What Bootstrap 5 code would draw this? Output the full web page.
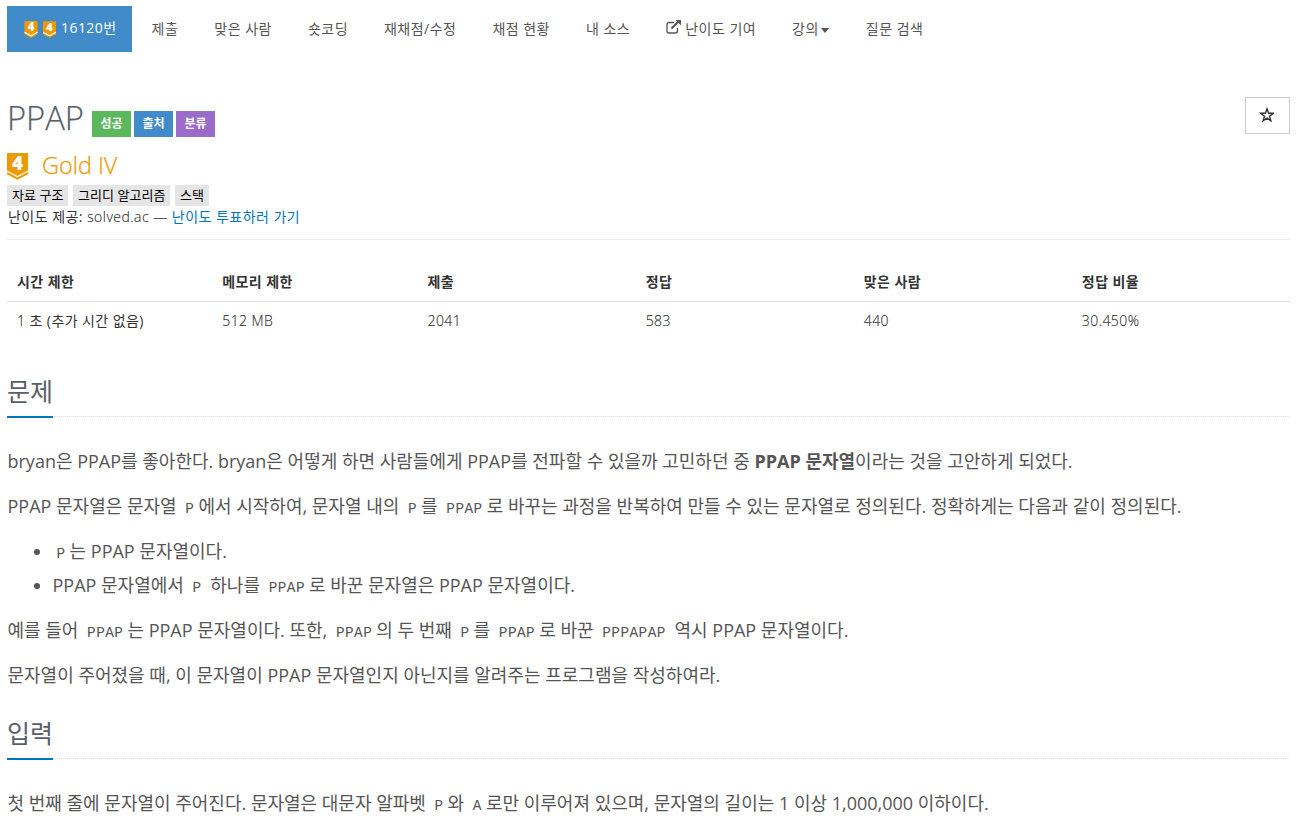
<!DOCTYPE html>
<html lang="ko">
  <head>
    <meta charset="UTF-8" />
    <title>16120번: PPAP</title>
    <meta name="viewport" content="width=device-width, initial-scale=1.0" />
    <link
      href="https://cdn.jsdelivr.net/npm/bootstrap@5.3.0/dist/css/bootstrap.min.css"
      rel="stylesheet"
    />
    <style>
      body {
        font-family: "Open Sans", "Noto Sans CJK KR", sans-serif;
        font-size: 14px;
        line-height: 20px;
        letter-spacing: 0.42px;
        color: #333;
        overflow: hidden;
      }
      .page-wrap {
        padding: 6px 18px 0 7px;
      }
      .problem-menu {
        --bs-nav-link-padding-x: 16px;
        --bs-nav-link-padding-y: 13px;
        --bs-nav-link-color: #555;
        --bs-nav-link-hover-color: #0076c0;
        --bs-nav-pills-border-radius: 0;
        --bs-nav-pills-link-active-bg: #428bca;
        gap: 4px;
      }
      .problem-menu .nav-link {
        font-size: 14px;
        letter-spacing: 0.48px;
        white-space: nowrap;
      }
      .problem-menu .nav-link.active {
        gap: 5px;
        padding: 12px 15px 14px 17px;
        letter-spacing: 0.45px;
      }
      .problem-menu .active svg { margin-top: 3px; }
      .caret {
        width: 0;
        border-top: 5px solid;
        border-left: 4.5px solid transparent;
        border-right: 4.5px solid transparent;
        margin: 2px 1px 0 2px;
      }
      .title-row { margin-top: 45px; }
      .title-main { padding-top: 3px; }
      .problem-title {
        font-size: 32.7px;
        font-weight: 300;
        line-height: 36px;
        letter-spacing: 0;
        color: #585f69;
        -webkit-text-stroke: 0.25px;
        margin-bottom: 1px;
      }
      .labels { gap: 3px; }
      .problem-label {
        font-size: 12px;
        font-weight: 600;
        line-height: 26px;
        letter-spacing: 0;
        width: 39px;
        text-align: center;
        color: #fff;
      }
      .bg-success-label { background: #5cb85c; }
      .bg-source-label { background: #428bca; }
      .bg-category-label { background: #9b6bcc; }
      .btn-star {
        width: 45px;
        height: 37px;
        border: 1px solid #ccc;
        border-radius: 0;
      }
      .tier-row {
        gap: 14px;
        margin-top: 16px;
      }
      .tier-name {
        font-size: 23.4px;
        font-weight: 300;
        line-height: 24px;
        letter-spacing: 0;
        color: #ec9a00;
        -webkit-text-stroke: 0.25px;
      }
      .tag-row {
        gap: 4.5px;
        margin-top: 5px;
      }
      .tag-item {
        font-size: 13px;
        line-height: 21px;
        letter-spacing: 0.05px;
        padding: 0 5px;
        background: #e5e5e5;
        color: #000;
      }
      .light-text {
        font-weight: 300;
        -webkit-text-stroke: 0.15px;
      }
      .provider {
        letter-spacing: 0.47px;
        margin-top: 1px;
        padding-left: 1px;
      }
      .provider a { color: #0076c0; }
      .title-rule {
        border-top: 1px solid #eee;
        opacity: 1;
        margin: 12px 0 24px;
      }
      .info-table {
        --bs-table-color: #333;
        table-layout: fixed;
        margin-bottom: 22px;
      }
      .info-table th,
      .info-table td {
        padding: 9px 8px 8px 10px;
        border: 0;
      }
      .info-table thead th {
        padding-top: 8px;
        padding-bottom: 9px;
        border-bottom: 1px solid #ddd;
      }
      .problem-section { padding-top: 14px; }
      .section-head { border-bottom: 1px dotted #e0e4ea; }
      .section-head h2 {
        font-size: 25px;
        font-weight: 400;
        line-height: 33px;
        letter-spacing: 0;
        color: #585f69;
        padding-bottom: 8px;
        margin: 0 0 -2px;
        border-bottom: 2px solid #0076c0;
      }
      .problem-text {
        font-size: 18px;
        line-height: 34px;
        letter-spacing: 0;
        color: #555;
        white-space: nowrap;
        padding: 27px 0 0 0.5px;
      }
      .problem-text p,
      .problem-text ul {
        margin-bottom: 11px;
      }
      .problem-text ul { padding-left: 45px; }
      .problem-text code {
        font-family: "Liberation Mono", monospace;
        font-size: 14.4px;
        line-height: 1;
        letter-spacing: 0.45px;
        color: #555;
        padding: 2px 4px;
      }
    </style>
  </head>
  <body>
    <svg class="d-none">
      <symbol id="tier" viewBox="0 0 21 27">
        <path fill="#ec9a00" d="M0 0h21v17.500l-10.500 5.500L0 17.500z" />
        <path fill="none" stroke="#ec9a00" stroke-width="2" d="M0 20l10.500 5.700L21 20" />
        <text x="10.500" y="17" text-anchor="middle" font-size="19" font-weight="800" letter-spacing="0" fill="#fff">4</text>
      </symbol>
      <symbol id="tier-small" viewBox="0 0 21 27">
        <path fill="#ec9a00" d="M0 0h21v21l-10.500 6L0 21z" />
        <path fill="none" stroke="#fff" stroke-width="1.800" d="M0 18l10.500 5.500L21 18" />
        <text x="10.500" y="16.500" text-anchor="middle" font-size="18" font-weight="800" letter-spacing="0" fill="#fff">4</text>
      </symbol>
    </svg>

    <div class="page-wrap">
      <ul class="nav nav-pills flex-nowrap problem-menu">
        <li class="nav-item">
          <a class="nav-link active d-flex align-items-center" href="#">
            <svg width="14" height="17"><use href="#tier-small" /></svg>
            <svg width="13" height="17"><use href="#tier-small" /></svg>
            <span>16120번</span>
          </a>
        </li>
        <li class="nav-item"><a class="nav-link" href="#">제출</a></li>
        <li class="nav-item"><a class="nav-link" href="#">맞은 사람</a></li>
        <li class="nav-item"><a class="nav-link" href="#">숏코딩</a></li>
        <li class="nav-item"><a class="nav-link" href="#">재채점/수정</a></li>
        <li class="nav-item"><a class="nav-link" href="#">채점 현황</a></li>
        <li class="nav-item"><a class="nav-link" href="#">내 소스</a></li>
        <li class="nav-item">
          <a class="nav-link d-flex align-items-center" href="#">
            <svg class="me-1 mb-1" width="15" height="14" viewBox="0 0 15 14" fill="none" stroke="currentColor">
              <path stroke-width="1.300" d="M8 2.500H3A2 2 0 0 0 1 4.500v6.500a2 2 0 0 0 2 2h6.500a2 2 0 0 0 2-2V8" />
              <path stroke-width="2" d="M5.500 8.500l6.500-6.500" />
              <path fill="currentColor" stroke="none" d="M9.500 0H15v5.500z" />
            </svg>
            난이도 기여
          </a>
        </li>
        <li class="nav-item">
          <a class="nav-link d-flex align-items-center" href="#">강의<span class="caret"></span></a>
        </li>
        <li class="nav-item"><a class="nav-link" href="#">질문 검색</a></li>
      </ul>

      <div class="d-flex justify-content-between align-items-start title-row">
        <div class="d-flex align-items-end title-main">
          <h1 class="problem-title me-2">PPAP</h1>
          <div class="d-flex labels">
            <span class="problem-label bg-success-label">성공</span>
            <span class="problem-label bg-source-label">출처</span>
            <span class="problem-label bg-category-label">분류</span>
          </div>
        </div>
        <button class="btn btn-star d-flex align-items-center justify-content-center p-0" type="button" aria-label="즐겨찾기">
          <svg class="me-1 mb-1" width="16" height="16" viewBox="0 0 16 16" fill="none" stroke="#333" stroke-width="1.400">
            <path d="M9 2.800l1.600 4.500h4.700l-3.800 2.900 1.400 4.600L9 12.100l-3.900 2.700 1.400-4.600-3.800-2.900h4.700z" />
          </svg>
        </button>
      </div>

      <div class="d-flex align-items-start tier-row">
        <svg width="21" height="27"><use href="#tier" /></svg>
        <span class="tier-name">Gold IV</span>
      </div>
      <div class="d-flex tag-row">
        <span class="tag-item">자료 구조</span>
        <span class="tag-item">그리디 알고리즘</span>
        <span class="tag-item">스택</span>
      </div>
      <div class="provider">
        난이도 제공: <span class="light-text">solved.ac —</span>
        <a class="text-decoration-none" href="#">난이도 투표하러 가기</a>
      </div>
      <hr class="title-rule" />

      <table class="table info-table">
        <colgroup>
          <col width="16%" /><col width="16%" /><col width="17%" />
          <col width="17%" /><col width="17%" /><col width="17%" />
        </colgroup>
        <thead>
          <tr>
            <th>시간 제한</th>
            <th>메모리 제한</th>
            <th>제출</th>
            <th>정답</th>
            <th>맞은 사람</th>
            <th>정답 비율</th>
          </tr>
        </thead>
        <tbody>
          <tr>
            <td><span class="light-text">1</span> 초 (추가 시간 없음)</td>
            <td class="light-text">512 MB</td>
            <td class="light-text">2041</td>
            <td class="light-text">583</td>
            <td class="light-text">440</td>
            <td class="light-text">30.450%</td>
          </tr>
        </tbody>
      </table>

      <section class="problem-section">
        <div class="section-head d-flex"><h2>문제</h2></div>
        <div class="problem-text">
          <p>bryan은 PPAP를 좋아한다. bryan은 어떻게 하면 사람들에게 PPAP를 전파할 수 있을까 고민하던 중 <strong>PPAP 문자열</strong>이라는 것을 고안하게 되었다.</p>
          <p>PPAP 문자열은 문자열 <code>P</code>에서 시작하여, 문자열 내의 <code>P</code>를 <code>PPAP</code>로 바꾸는 과정을 반복하여 만들 수 있는 문자열로 정의된다. 정확하게는 다음과 같이 정의된다.</p>
          <ul>
            <li><code>P</code>는 PPAP 문자열이다.</li>
            <li>PPAP 문자열에서 <code>P</code> 하나를 <code>PPAP</code>로 바꾼 문자열은 PPAP 문자열이다.</li>
          </ul>
          <p>예를 들어 <code>PPAP</code>는 PPAP 문자열이다. 또한, <code>PPAP</code>의 두 번째 <code>P</code>를 <code>PPAP</code>로 바꾼 <code>PPPAPAP</code> 역시 PPAP 문자열이다.</p>
          <p>문자열이 주어졌을 때, 이 문자열이 PPAP 문자열인지 아닌지를 알려주는 프로그램을 작성하여라.</p>
        </div>
      </section>

      <section class="problem-section">
        <div class="section-head d-flex"><h2>입력</h2></div>
        <div class="problem-text">
          <p>첫 번째 줄에 문자열이 주어진다. 문자열은 대문자 알파벳 <code>P</code>와 <code>A</code>로만 이루어져 있으며, 문자열의 길이는 1 이상 1,000,000 이하이다.</p>
        </div>
      </section>
    </div>
    <script src="https://cdn.jsdelivr.net/npm/bootstrap@5.3.0/dist/js/bootstrap.bundle.min.js"></script>
  </body>
</html>
